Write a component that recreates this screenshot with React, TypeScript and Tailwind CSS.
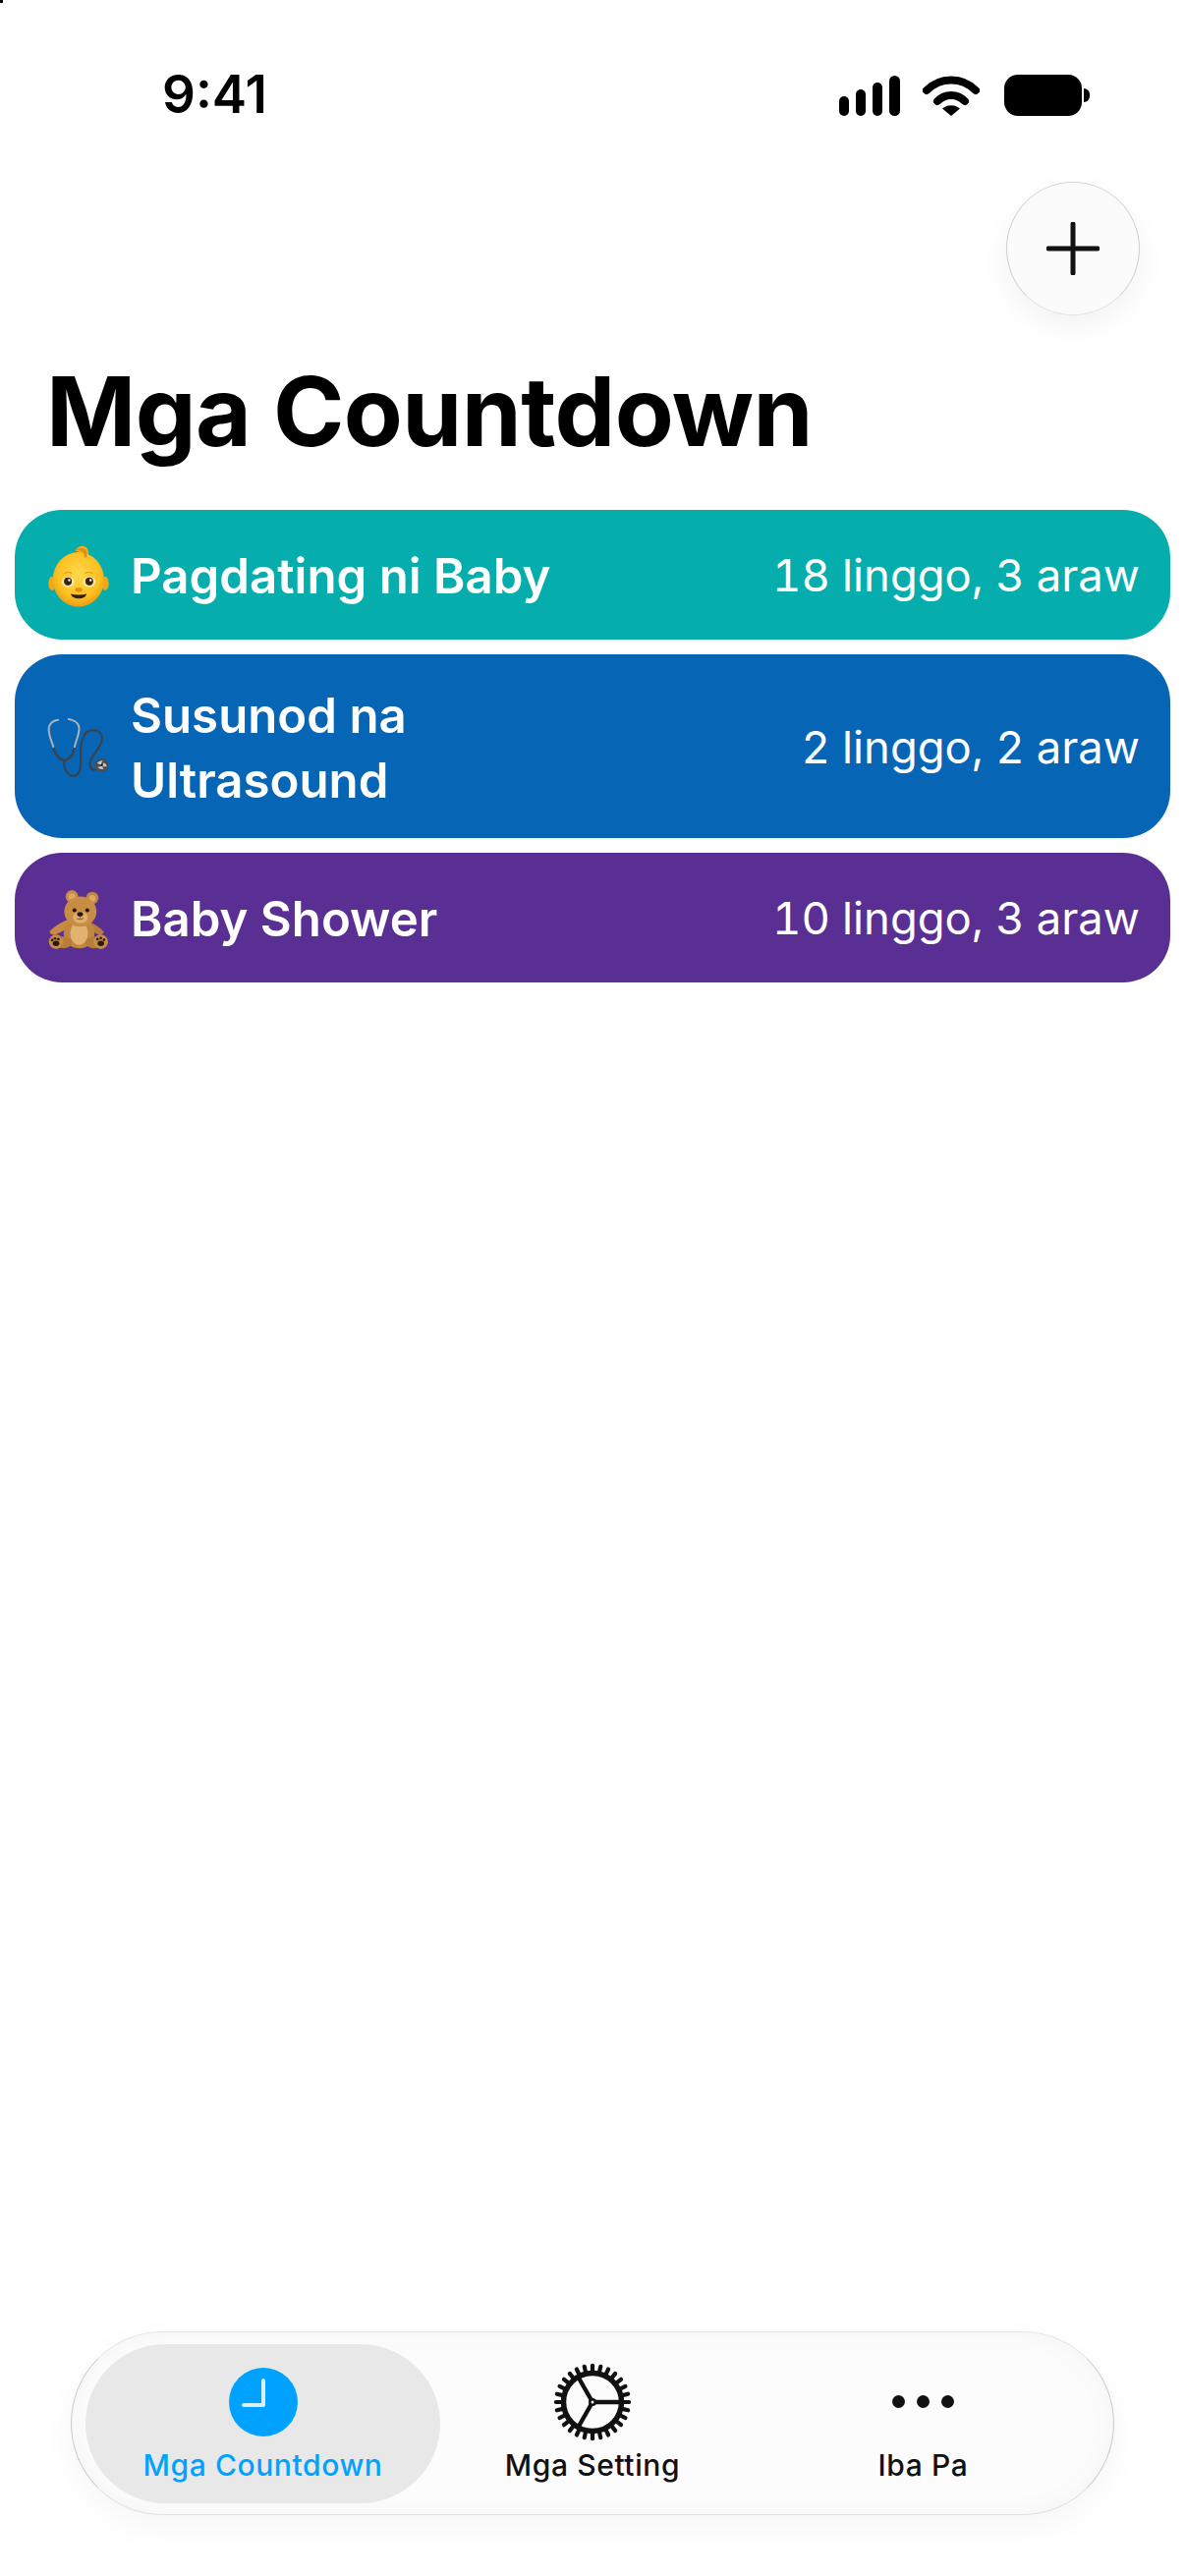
function BabyEmoji() {
  return (
    <svg viewBox="50 35 200 200" className="w-[67px] h-[67px] shrink-0">
      <defs>
        <radialGradient id="babySkin" cx="50%" cy="42%" r="60%">
          <stop offset="0%" stopColor="#ffd84d" />
          <stop offset="70%" stopColor="#fcc021" />
          <stop offset="100%" stopColor="#e89a10" />
        </radialGradient>
      </defs>
      <ellipse cx="68" cy="160" rx="11" ry="21" fill="#f0a818" />
      <ellipse cx="229" cy="160" rx="11" ry="21" fill="#f0a818" />
      <path d="M138 60c8-14 30-20 38-4 6 12 2 26-6 34-2-12-10-24-32-30z" fill="#f3ab1a" />
      <ellipse cx="148" cy="148" rx="78" ry="83" fill="url(#babySkin)" />
      <path d="M138 60c14-6 28 2 30 24 6-4 8-14 4-22-4-10-22-14-34-2z" fill="#dc8f10" />
      <ellipse cx="116" cy="155" rx="19" ry="16" fill="#ffe9a6" />
      <ellipse cx="181" cy="155" rx="19" ry="16" fill="#ffe9a6" />
      <circle cx="116" cy="154" r="12" fill="#3a2412" />
      <circle cx="181" cy="154" r="12" fill="#3a2412" />
      <circle cx="120" cy="150" r="3.5" fill="#fff" />
      <circle cx="185" cy="150" r="3.5" fill="#fff" />
      <path d="M104 130q12-7 24-1M168 129q12-6 24 1" stroke="#e59a14" strokeWidth="3" fill="none" />
      <ellipse cx="149" cy="179" rx="11" ry="7" fill="#e2900f" />
      <path d="M124 192q25 6 49 0q-4 14-24 14t-25-14z" fill="#33210e" />
    </svg>
  );
}

function StethoscopeEmoji() {
  return (
    <svg viewBox="50 48 200 200" className="w-[67px] h-[67px] shrink-0">
      <g fill="none" strokeLinecap="round" strokeLinejoin="round">
        <path d="M105 192c-2 14 2 38 22 46 20 4 28-16 28-36 0-28-4-58 8-82 10-24 42-28 54-8 12 22-18 54-32 78-4 12-2 32 14 30" stroke="#3c4147" strokeWidth="6" />
        <path d="M72 150c4 22 14 36 33 42 19-6 29-20 31-42" stroke="#3c4147" strokeWidth="7" />
        <path d="M86 68c-14 2-26 10-28 26-1 20 8 38 14 56M118 66c14 2 30 10 32 26 1 20-10 40-14 58" stroke="#a8b2ba" strokeWidth="6" />
      </g>
      <circle cx="218" cy="206" r="21" fill="#4a4d52" />
      <path d="M204 200q8-10 18-8l-6 12zM224 198q10 4 10 12l-12 0zM206 212q8 8 18 6l-4-10z" fill="#c4c8cb" />
      <circle cx="218" cy="206" r="3" fill="#222" />
    </svg>
  );
}

function BearEmoji() {
  return (
    <svg viewBox="50 32 200 200" className="w-[67px] h-[67px] shrink-0">
      <circle cx="128" cy="66" r="19" fill="#c88d45" />
      <circle cx="128" cy="67" r="10" fill="#dda862" />
      <circle cx="190" cy="71" r="19" fill="#c08540" />
      <circle cx="190" cy="72" r="10" fill="#dda862" />
      <path d="M120 135c-18 6-46 22-58 36-4 10 8 14 18 10 18-8 36-16 46-26z" fill="#c68a42" />
      <path d="M184 145c14 6 30 16 42 30l-12 10-34-18z" fill="#b97d38" />
      <ellipse cx="150" cy="178" rx="47" ry="46" fill="#c2873f" />
      <ellipse cx="150" cy="178" rx="27" ry="35" fill="#e2b370" />
      <ellipse cx="102" cy="206" rx="26" ry="18" fill="#b97d38" />
      <ellipse cx="195" cy="206" rx="26" ry="18" fill="#b97d38" />
      <ellipse cx="154" cy="112" rx="49" ry="46" fill="#c88d45" />
      <ellipse cx="154" cy="130" rx="23" ry="18" fill="#dfae6a" />
      <circle cx="136" cy="108" r="6" fill="#221509" />
      <circle cx="175" cy="108" r="6" fill="#221509" />
      <ellipse cx="153" cy="120" rx="9" ry="7" fill="#221509" />
      <path d="M153 126v6M143 133q10 6 20 0" stroke="#6d431a" strokeWidth="2.5" fill="none" />
      <circle cx="80" cy="204" r="22" fill="#c88d45" />
      <circle cx="216" cy="204" r="22" fill="#c88d45" />
      <ellipse cx="80" cy="209" rx="10" ry="8" fill="#2a1a0c" />
      <ellipse cx="216" cy="209" rx="10" ry="8" fill="#2a1a0c" />
      <circle cx="68" cy="199" r="4" fill="#2a1a0c" />
      <circle cx="77" cy="194" r="4" fill="#2a1a0c" />
      <circle cx="87" cy="196" r="4" fill="#2a1a0c" />
      <circle cx="206" cy="196" r="4" fill="#2a1a0c" />
      <circle cx="216" cy="193" r="4" fill="#2a1a0c" />
      <circle cx="226" cy="198" r="4" fill="#2a1a0c" />
    </svg>
  );
}

function GearIcon() {
  const teeth = Array.from({ length: 28 }, (_, i) => (i * 360) / 28);
  return (
    <svg viewBox="0 0 80 80" className="w-[80px] h-[80px]">
      {teeth.map((deg) => (
        <rect key={deg} x="37.9" y="0.8" width="4.2" height="9" rx="2" fill="#111" transform={`rotate(${deg} 40 40)`} />
      ))}
      <circle cx="40" cy="40" r="29.5" fill="none" stroke="#111" strokeWidth="5.5" />
      <path d="M40 40H68M40 40L26 15.5M40 40L26 64.5" stroke="#111" strokeWidth="4.4" />
      <circle cx="40" cy="40" r="4" fill="#111" />
      <circle cx="40" cy="40" r="1.5" fill="#fff" />
    </svg>
  );
}

const rows = [
  { name: 'Pagdating ni Baby', left: '18 linggo, 3 araw', color: 'bg-[#05aead]', icon: <BabyEmoji />, size: 'h-[132px]' },
  { name: 'Susunod na Ultrasound', left: '2 linggo, 2 araw', color: 'bg-[#0665b4]', icon: <StethoscopeEmoji />, size: 'h-[187px]' },
  { name: 'Baby Shower', left: '10 linggo, 3 araw', color: 'bg-[#5a2f93]', icon: <BearEmoji />, size: 'h-[132px]' },
];

export default function App() {
  return (
    <div className="relative flex flex-col h-[2622px] w-[1206px] bg-white font-[Inter,sans-serif] text-black overflow-hidden">
      <div className="absolute left-0 top-0 w-[3px] h-[3px] bg-black" />

      {/* status bar */}
      <div className="flex items-start h-[185px] shrink-0 pt-[70px] pl-[165px] pr-[97px]">
        <span className="text-[53px] leading-[53px] font-semibold">9:41</span>
        <div className="ml-auto flex items-start pt-[6px]">
          <svg viewBox="0 0 62 41" className="w-[62px] h-[41px] mt-[1px]">
            <rect x="0" y="21" width="10" height="20" rx="5" />
            <rect x="17" y="14" width="10" height="27" rx="5" />
            <rect x="34" y="7" width="10" height="34" rx="5" />
            <rect x="51" y="0" width="11" height="41" rx="5.5" />
          </svg>
          <svg viewBox="0 0 58 42" className="ml-[23px] w-[58px] h-[42px]">
            <path d="M4 16C18 2 40 2 54 16" fill="none" stroke="#000" strokeWidth="8" strokeLinecap="round" />
            <path d="M15 27C23 19 35 19 43 27" fill="none" stroke="#000" strokeWidth="8" strokeLinecap="round" />
            <path d="M20 34.5C25 30 33 30 38 34.5L29 42Z" />
          </svg>
          <div className="ml-[25px] flex items-center">
            <div className="w-[79px] h-[42px] rounded-[14px] bg-black" />
            <div className="w-[6px] h-[14px] ml-[2px] rounded-r-full bg-black" />
          </div>
        </div>
      </div>

      <div className="flex justify-end pr-[46px] shrink-0">
        <button className="flex items-center justify-center w-[136px] h-[136px] rounded-full bg-[#fbfbfb] border border-x-[#cfcfcf] border-t-[#d6d6d6] border-b-[#e2e2e2] shadow-[0_12px_32px_rgba(0,0,0,0.05)]">
          <svg viewBox="0 0 54 54" className="w-[54px] h-[54px]">
            <path d="M27 2V52M2 27H52" stroke="#111" strokeWidth="5" strokeLinecap="round" />
          </svg>
        </button>
      </div>

      <h1 className="pl-[47px] mt-[39px] text-[98px] leading-[118px] font-bold tracking-[-0.6px] shrink-0">Mga Countdown</h1>

      <div className="flex flex-col gap-[15px] px-[15px] mt-[41px]">
        {rows.map((row) => (
          <div key={row.name} className={`flex items-center pl-[32px] pr-[31px] rounded-[48px] text-white ${row.color} ${row.size}`}>
            {row.icon}
            <span className="ml-[19px] mt-[2px] w-[440px] text-[49.2px] leading-[66px] font-semibold">{row.name}</span>
            <span className="ml-auto mt-[2px] text-[45.4px] leading-[66px] font-normal tabular-nums">{row.left}</span>
          </div>
        ))}
      </div>

      {/* tab bar */}
      <div className="mt-auto mb-[62px] mx-[72px] flex items-center h-[187px] px-[14px] rounded-[94px] bg-[#fcfcfc] border border-x-[#c8c8c8] border-t-[#e6e6e6] border-b-[#e0e0e0] shadow-[inset_0_0_28px_rgba(0,0,0,0.035),0_12px_36px_rgba(0,0,0,0.04)]">
        <div className="flex flex-col items-center w-[361px] h-[162px] pt-[24px] rounded-[81px] bg-[#e9e8e9] text-[#00a2ff]">
          <svg viewBox="0 0 70 70" className="w-[70px] h-[70px]">
            <circle cx="35" cy="35" r="35" fill="#00a2ff" />
            <path d="M35 13V38H15" fill="none" stroke="#d8f0ff" strokeWidth="4" strokeLinecap="round" strokeLinejoin="round" />
          </svg>
          <span className="mt-[9px] text-[30px] leading-[40px] font-medium tracking-[0.6px]">Mga Countdown</span>
        </div>
        <div className="flex flex-col items-center w-[310px] h-[162px] pt-[19px]">
          <GearIcon />
          <span className="mt-[4px] text-[30px] leading-[40px] font-medium tracking-[0.6px] text-[#111]">Mga Setting</span>
        </div>
        <div className="flex flex-col items-center flex-1 h-[162px] pt-[19px] pl-[2px]">
          <div className="flex items-center justify-center gap-[12px] h-[80px]">
            <div className="w-[13px] h-[13px] rounded-full bg-[#111]" />
            <div className="w-[13px] h-[13px] rounded-full bg-[#111]" />
            <div className="w-[13px] h-[13px] rounded-full bg-[#111]" />
          </div>
          <span className="mt-[4px] text-[30px] leading-[40px] font-medium tracking-[0.6px] text-[#111]">Iba Pa</span>
        </div>
      </div>
    </div>
  );
}
